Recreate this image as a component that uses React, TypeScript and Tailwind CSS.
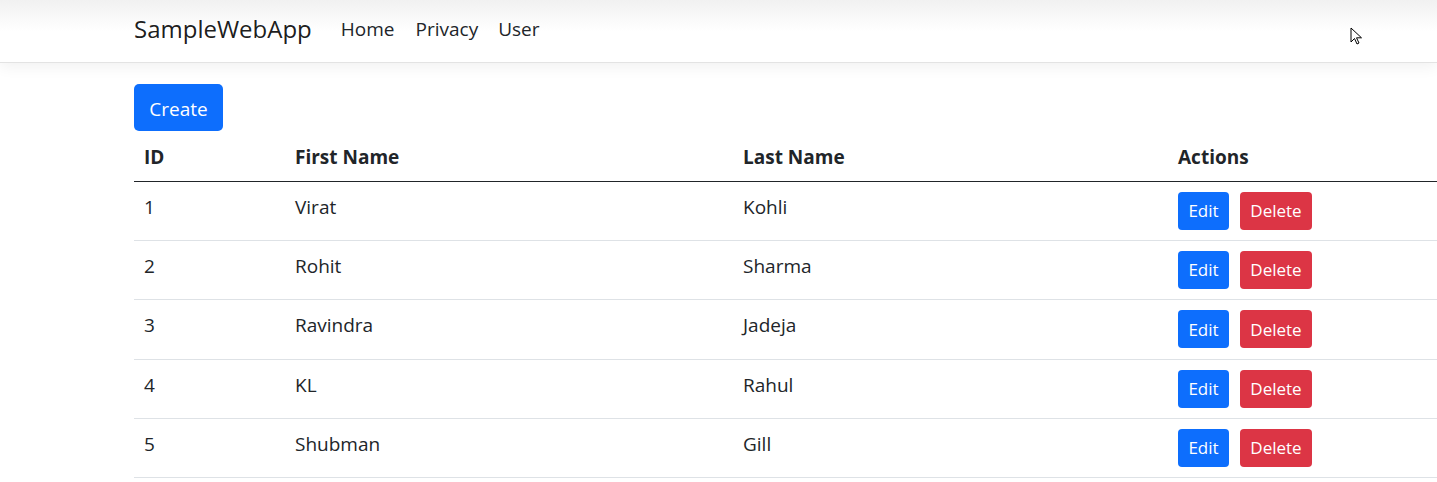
import React from 'react';

interface Player {
  id: number;
  firstName: string;
  lastName: string;
}

const players: Player[] = [
  { id: 1, firstName: 'Virat', lastName: 'Kohli' },
  { id: 2, firstName: 'Rohit', lastName: 'Sharma' },
  { id: 3, firstName: 'Ravindra', lastName: 'Jadeja' },
  { id: 4, firstName: 'KL', lastName: 'Rahul' },
  { id: 5, firstName: 'Shubman', lastName: 'Gill' },
];

const Cursor: React.FC = () => (
  <svg className="absolute left-[1350px] top-[27px]" width="14" height="20" viewBox="0 0 14 20">
    <path d="M1 1 L1 15 L4.5 11.5 L7 17 L9 16 L6.5 10.8 L11.5 10.8 Z" fill="#fff" stroke="#000" strokeWidth="1" strokeLinejoin="round" />
  </svg>
);

export default function App() {
  return (
    <div className="relative min-h-[482px] w-full overflow-hidden bg-white font-['Open_Sans',sans-serif] text-[#212529]">
      {/* Navbar */}
      <header className="h-[63px] border-b border-[#e3e3e3] bg-gradient-to-b from-[#f1f1f1] via-white to-white shadow-[0_4px_14px_rgba(0,0,0,0.06)]">
        <nav className="ml-[134px] flex h-full items-center pb-[4px]">
          <span className="mr-[29px] text-[24px] text-black/90">SampleWebApp</span>
          <a className="mr-[21px] text-[19px] text-[#212529]">Home</a>
          <a className="mr-[20px] text-[19px] text-[#212529]">Privacy</a>
          <a className="text-[19px] text-[#212529]">User</a>
        </nav>
      </header>
      <Cursor />

      <main className="ml-[134px] mt-[21px]">
        <button className="h-[47px] w-[89px] rounded-[5px] bg-[#0d6efd] pt-[3px] text-[19px] text-white">Create</button>

        <table className="w-[1400px] table-fixed border-collapse text-[19px]">
          <colgroup>
            <col className="w-[151px]" />
            <col className="w-[448px]" />
            <col className="w-[435px]" />
            <col />
          </colgroup>
          <thead>
            <tr className="h-[50px] border-b border-[#212529] text-left">
              <th className="px-[10px] pt-[2px] align-middle font-bold">ID</th>
              <th className="px-[10px] pt-[2px] align-middle font-bold">First Name</th>
              <th className="px-[10px] pt-[2px] align-middle font-bold">Last Name</th>
              <th className="px-[10px] pt-[2px] align-middle font-bold">Actions</th>
            </tr>
          </thead>
          <tbody>
            {players.map((p) => (
              <tr key={p.id} className="h-[59.4px] border-b border-[#dee2e6]">
                <td className="px-[10px] pt-[10px] align-top leading-[30px]">{p.id}</td>
                <td className="px-[10px] pt-[10px] align-top leading-[30px]">{p.firstName}</td>
                <td className="px-[10px] pt-[10px] align-top leading-[30px]">{p.lastName}</td>
                <td className="px-[10px] pt-[10px] align-top">
                  <div className="flex gap-[11px]">
                    <button className="h-[38px] w-[51px] rounded-[4px] bg-[#0d6efd] text-[17px] text-white">Edit</button>
                    <button className="h-[38px] w-[72px] rounded-[4px] bg-[#dc3545] text-[17px] text-white">Delete</button>
                  </div>
                </td>
              </tr>
            ))}
          </tbody>
        </table>
      </main>
    </div>
  );
}
